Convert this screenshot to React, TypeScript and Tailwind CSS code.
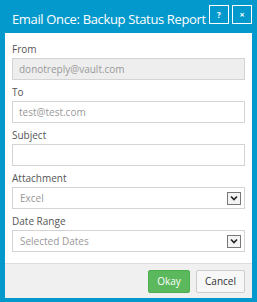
function Field({ label, children }: { label: string; children: React.ReactNode }) {
  return (
    <div>
      <div className="h-4 mb-[1px] text-[10px] leading-4 text-[#555]">{label}</div>
      {children}
    </div>
  );
}

function SelectBox({ value }: { value: string }) {
  return (
    <div className="h-[22px] border border-[#d4d4d4] bg-white flex items-center pl-[7px] pr-[3px]">
      <span className="flex-1 text-[10px] text-[#999]">{value}</span>
      <span className="w-[14px] h-[13px] border border-[#777] bg-[#f4f4f4] flex items-center justify-center">
        <svg width="8" height="6" viewBox="0 0 8 6">
          <path d="M1 1.5 L4 4.5 L7 1.5" fill="none" stroke="#222" strokeWidth="1.6" />
        </svg>
      </span>
    </div>
  );
}

export default function App() {
  return (
    <div className="w-[257px] h-[302px] bg-[#0399cc] flex flex-col" style={{ fontFamily: '"Open Sans", sans-serif' }}>
      <div className="h-[33px] flex items-start pl-[12px] pr-[5px]">
        <span className="flex-1 mt-[10px] whitespace-nowrap text-[13px] leading-[18px] tracking-[-0.35px] text-white">Email Once: Backup Status Report</span>
        <div className="flex gap-[3px] mt-[5px]">
          <span className="w-[20px] h-[19px] border border-white flex items-center justify-center text-white text-[8px] font-bold">?</span>
          <span className="w-[20px] h-[19px] border border-white flex items-center justify-center text-white text-[9px] font-bold">×</span>
        </div>
      </div>
      <div className="mx-[5px] bg-white pt-[8px] pb-[11px] px-[7px] flex flex-col gap-[4px]">
        <Field label="From">
          <div className="h-[22px] border border-[#d4d4d4] bg-[#eeeeee] flex items-center px-[6px] text-[10px] text-[#999]">donotreply@vault.com</div>
        </Field>
        <Field label="To">
          <div className="h-[22px] border border-[#d4d4d4] bg-white flex items-center px-[6px] text-[10px] text-[#999]">test@test.com</div>
        </Field>
        <Field label="Subject">
          <div className="h-[22px] border border-[#d4d4d4] bg-white" />
        </Field>
        <Field label="Attachment">
          <SelectBox value="Excel" />
        </Field>
        <Field label="Date Range">
          <SelectBox value="Selected Dates" />
        </Field>
      </div>
      <div className="mx-[5px] h-[35px] border-t border-[#dddddd] bg-[#f0f0f0] flex items-start justify-end gap-[6px] pt-[6px] pr-[7px]">
        <button className="w-[42px] h-[23px] rounded-[2px] bg-[#5cb85c] border border-[#4cae4c] text-white text-[10px]">Okay</button>
        <button className="w-[49px] h-[23px] rounded-[2px] bg-[#f7f7f7] border border-[#cccccc] text-[#333] text-[10px]">Cancel</button>
      </div>
    </div>
  );
}
